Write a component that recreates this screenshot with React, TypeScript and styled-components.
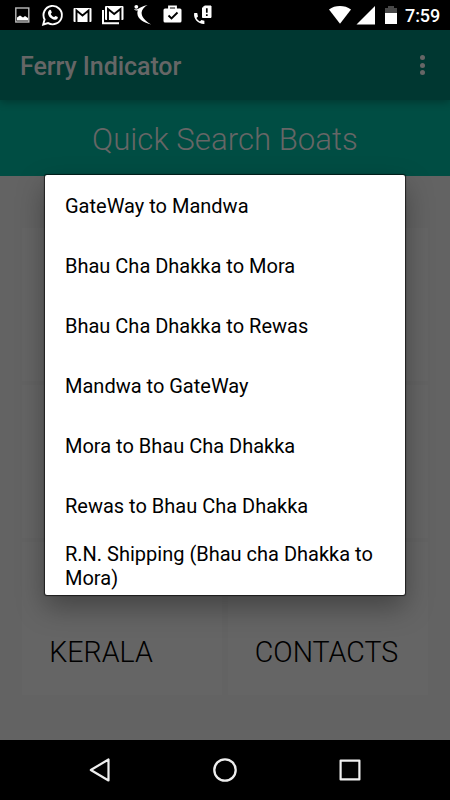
import React from "react";
import styled, { createGlobalStyle } from "styled-components";

const Global = createGlobalStyle`
  * { box-sizing: border-box; }
  body { margin: 0; background: #000; font-family: Roboto, "Noto Sans", sans-serif; }
`;

const Screen = styled.div`
  position: relative;
  width: 450px;
  height: 800px;
  display: flex;
  flex-direction: column;
  overflow: hidden;
  background: #000;
`;

const StatusBar = styled.header`
  height: 30px;
  flex: none;
  display: flex;
  justify-content: space-between;
  background: #000;
`;

const Clock = styled.span`
  width: 45px;
  color: #fff;
  font-size: 18px;
  font-weight: 500;
  line-height: 32px;
  letter-spacing: -0.1px;
`;

const StatusRight = styled.div`
  display: flex;
`;

const Toolbar = styled.div`
  position: relative;
  height: 70px;
  flex: none;
  display: flex;
  align-items: center;
  justify-content: space-between;
  padding: 3px 20px 0;
  background: #003731;
  box-shadow: 0 2px 8px rgba(0, 0, 0, 0.3);
`;

const Title = styled.h1`
  margin: 0;
  color: #666;
  font-size: 25px;
  font-weight: 500;
  line-height: 30px;
  letter-spacing: -0.07px;
`;

const Overflow = styled.div`
  width: 15px;
  display: flex;
  flex-direction: column;
  align-items: center;
  gap: 2.5px;
  padding-bottom: 3px;
`;

const Dot = styled.i`
  width: 5px;
  height: 5px;
  border-radius: 50%;
  background: #666;
`;

const Banner = styled.div`
  height: 76px;
  flex: none;
  padding-top: 20px;
  text-align: center;
  background: #004d43;
  color: #666;
  font-size: 31.2px;
  font-weight: 300;
  line-height: 40px;
`;

const Content = styled.main`
  height: 564px;
  flex: none;
  padding: 52px 22px 0;
  background: #636363;
`;

const Tiles = styled.div`
  display: grid;
  grid-template-columns: 200px 200px;
  grid-auto-rows: 153px;
  column-gap: 6px;
  row-gap: 4px;
`;

const Tile = styled.div`
  display: flex;
  align-items: flex-end;
  justify-content: center;
  padding-bottom: 24px;
  background: #656565;
  color: #000;
  font-size: 28.6px;
  font-weight: 300;
  line-height: 38px;
`;

const TileLabel = styled.span<{ $shift: number }>`
  margin-left: ${(p) => p.$shift}px;
`;

const Dialog = styled.div`
  position: absolute;
  left: 45px;
  top: 175px;
  width: 360px;
  height: 420px;
  border-radius: 2px;
  background: #fff;
  box-shadow: 0 0 1px 1px rgba(0, 0, 0, 0.65), 0 12px 28px rgba(0, 0, 0, 0.34);
`;

const Option = styled.div`
  height: 60px;
  padding: 1px 20px 0;
  display: flex;
  align-items: center;
  color: #000;
  font-size: 20px;
  line-height: 24px;
`;

const NavBar = styled.nav`
  height: 60px;
  flex: none;
  display: grid;
  grid-template-columns: repeat(3, 125px);
  justify-content: center;
  align-items: center;
  justify-items: center;
  background: #000;
`;

const OPTIONS = [
  "GateWay to Mandwa",
  "Bhau Cha Dhakka to Mora",
  "Bhau Cha Dhakka to Rewas",
  "Mandwa to GateWay",
  "Mora to Bhau Cha Dhakka",
  "Rewas to Bhau Cha Dhakka",
  "R.N. Shipping (Bhau cha Dhakka to Mora)",
];

const NotificationIcons = () => (
  <svg width="224" height="30" viewBox="0 0 224 30" fill="none">
    <rect x="15.8" y="8" width="13" height="14" stroke="#bbb" strokeWidth="1.4" />
    <path d="M17 20.5v-3l3-2 3 2 2-1.5 3 2v2.5z" fill="#fff" />
    <path d="M43.200 24.500l1.400-5a9.200 9.200 0 1 1 3.500 3.600z" stroke="#fff" strokeWidth="1.9" />
    <path d="M49.3 10.2c.7-.7 1.4-.5 1.8.4l.7 1.8-1.1 1.5c.8 1.6 1.9 2.6 3.5 3.2l1.3-1.2 2.3 1.1c.3 1.7-1.3 3-3.1 2.7-4-.7-6.7-4.1-6.7-6.8 0-1.100.6-2.100 1.300-2.700z" fill="#fff" />
    <rect x="73.5" y="8" width="18" height="14" rx="1" fill="#fff" />
    <path d="M76.500 22V10.500l6 5 6-5V22" stroke="#000" strokeWidth="1.900" />
    <path d="M103 10v13.200h16" stroke="#fff" strokeWidth="2" />
    <rect x="105" y="6" width="18.500" height="14" rx="1" fill="#fff" />
    <path d="M108 20V9l6.200 5 6.300-5V20" stroke="#000" strokeWidth="1.900" />
    <circle cx="136.300" cy="6.800" r="1.900" fill="#fff" />
    <path d="M134 9c1.500.7 3 .6 4.300-.2 2-1.400 5-3 9.300-3.800-3.500 2-5.800 4.600-6 7.500-.2 4.200 3.500 8.500 9.700 12-7.500-1.700-13.500-5.500-13.900-10.700-.1-1.700.1-2.700.6-3.300-1.500.3-3.200-.2-4-1.500z" fill="#fff" />
    <path d="M169 9V6.500h7V9" stroke="#fff" strokeWidth="1.800" />
    <rect x="163.500" y="8.500" width="18" height="14" rx="1.500" fill="#fff" />
    <path d="M168.500 15.500l3 3 6-6" stroke="#000" strokeWidth="1.900" />
    <path d="M194.200 13h3l.8 3.500-1.600 1.500c.8 1.500 2 2.700 3.500 3.500l1.500-1.500 3 .8v3.200c-6 .3-11.300-5-10.200-11z" fill="#fff" />
    <path d="M204.500 6h6.500v11.500h-8.500V8z" fill="#fff" stroke="#fff" strokeLinejoin="round" />
    <path d="M206.800 8.300v4.400M206.800 14.200v1.800" stroke="#000" strokeWidth="1.700" />
  </svg>
);

const SignalIcons = () => (
  <svg width="76" height="30" viewBox="329 0 76 30">
    <path d="M329 9.400C335 4.900 344.800 4.900 351 9.400L340 23.800z" fill="#fff" />
    <path d="M375 6v18.500h-18.500z" fill="#fff" />
    <path d="M385 13V8h3V6h6v2h3v5z" fill="#484848" />
    <path d="M385 13h12v11h-12z" fill="#fff" />
  </svg>
);

export default function App() {
  return (
    <>
      <Global />
      <Screen>
        <StatusBar>
          <NotificationIcons />
          <StatusRight>
            <SignalIcons />
            <Clock>7:59</Clock>
          </StatusRight>
        </StatusBar>
        <Toolbar>
          <Title>Ferry Indicator</Title>
          <Overflow><Dot /><Dot /><Dot /></Overflow>
        </Toolbar>
        <Banner>Quick Search Boats</Banner>
        <Content>
          <Tiles>
            <Tile /><Tile /><Tile /><Tile />
            <Tile><TileLabel $shift={-42}>KERALA</TileLabel></Tile>
            <Tile><TileLabel $shift={-3}>CONTACTS</TileLabel></Tile>
          </Tiles>
        </Content>
        <NavBar>
          <svg width="24" height="28" viewBox="0 0 24 28" fill="none" stroke="#eee" strokeWidth="2.2" strokeLinejoin="round"><path d="M20.500 3.500v21L2.800 14z" /></svg>
          <svg width="28" height="28" viewBox="0 0 28 28" fill="none" stroke="#eee" strokeWidth="2.300"><circle cx="14" cy="14" r="10.700" /></svg>
          <svg width="28" height="28" viewBox="0 0 28 28" fill="none" stroke="#eee" strokeWidth="2.200" strokeLinejoin="round"><rect x="4.600" y="4.600" width="18.800" height="18.800" /></svg>
        </NavBar>
        <Dialog role="listbox">
          {OPTIONS.map((label) => <Option key={label} role="option">{label}</Option>)}
        </Dialog>
      </Screen>
    </>
  );
}
